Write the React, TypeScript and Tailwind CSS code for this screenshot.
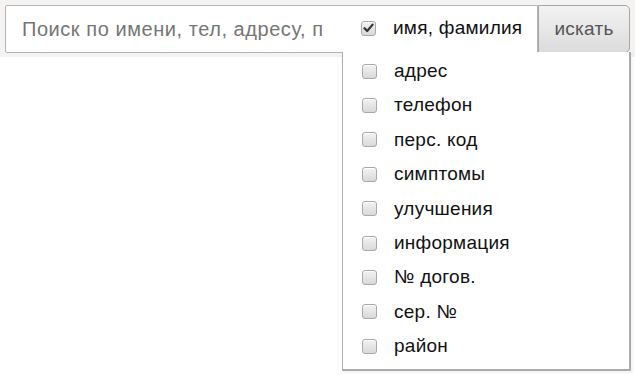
import { useState } from 'react';

const fields = [
  'адрес',
  'телефон',
  'перс. код',
  'симптомы',
  'улучшения',
  'информация',
  '№ догов.',
  'сер. №',
  'район',
];

function Box({ checked }: { checked?: boolean }) {
  return (
    <span className="flex h-[15px] w-[15px] shrink-0 items-center justify-center rounded-[3px] border border-[#a9a9a9] bg-gradient-to-b from-[#f2f2f2] to-[#d9d9d9] shadow-[inset_0_1px_0_#fff]">
      {checked && (
        <svg width="11" height="10" viewBox="0 0 11 10">
          <path d="M1.5 5.2 L4.2 8 L9.6 1.6" fill="none" stroke="#333" strokeWidth="2.2" strokeLinecap="round" strokeLinejoin="round" />
        </svg>
      )}
    </span>
  );
}

export default function App() {
  const [checked, setChecked] = useState<Record<string, boolean>>({});

  return (
    <div className="relative h-[375px] w-[635px] overflow-hidden bg-white font-['Liberation_Sans',Arial,sans-serif] text-[19px] tracking-[0.25px]">
      <div className="bg-[#f4f3f1] p-[5px] pb-[4px]">
        <div className="flex h-[48px]">
          <div className="flex w-[533px] items-center overflow-hidden rounded-l-[2px] border border-[#b4b4b4] bg-white">
            <div className="w-[316px] shrink-0 overflow-hidden whitespace-nowrap pl-[16px] text-[20px] tracking-[0.55px] text-[#757575]">
              Поиск по имени, тел, адресу, п
            </div>
            <div className="ml-[39px] flex items-center gap-[17px] pb-[2px]">
              <Box checked />
              <span className="text-[#111]">имя, фамилия</span>
            </div>
          </div>
          <button className="w-[92px] rounded-r-[5px] border border-[#a6a6a6] bg-gradient-to-b from-[#f3f3f3] to-[#dcdcdc] text-[#555]">
            искать
          </button>
        </div>
      </div>

      <div className="absolute left-[342px] top-[52px] w-[289px] border-b-2 border-l border-r-2 border-[#ababab] bg-white pb-[5px] pt-[2px] shadow-[2px_2px_2px_rgba(0,0,0,0.05)]">
        {fields.map((f) => (
          <label
            key={f}
            className="flex h-[34.4px] cursor-pointer items-center gap-[17px] pl-[19px]"
            onClick={() => setChecked((c) => ({ ...c, [f]: !c[f] }))}
          >
            <Box checked={checked[f]} />
            <span className="text-[#111]">{f}</span>
          </label>
        ))}
      </div>
    </div>
  );
}
